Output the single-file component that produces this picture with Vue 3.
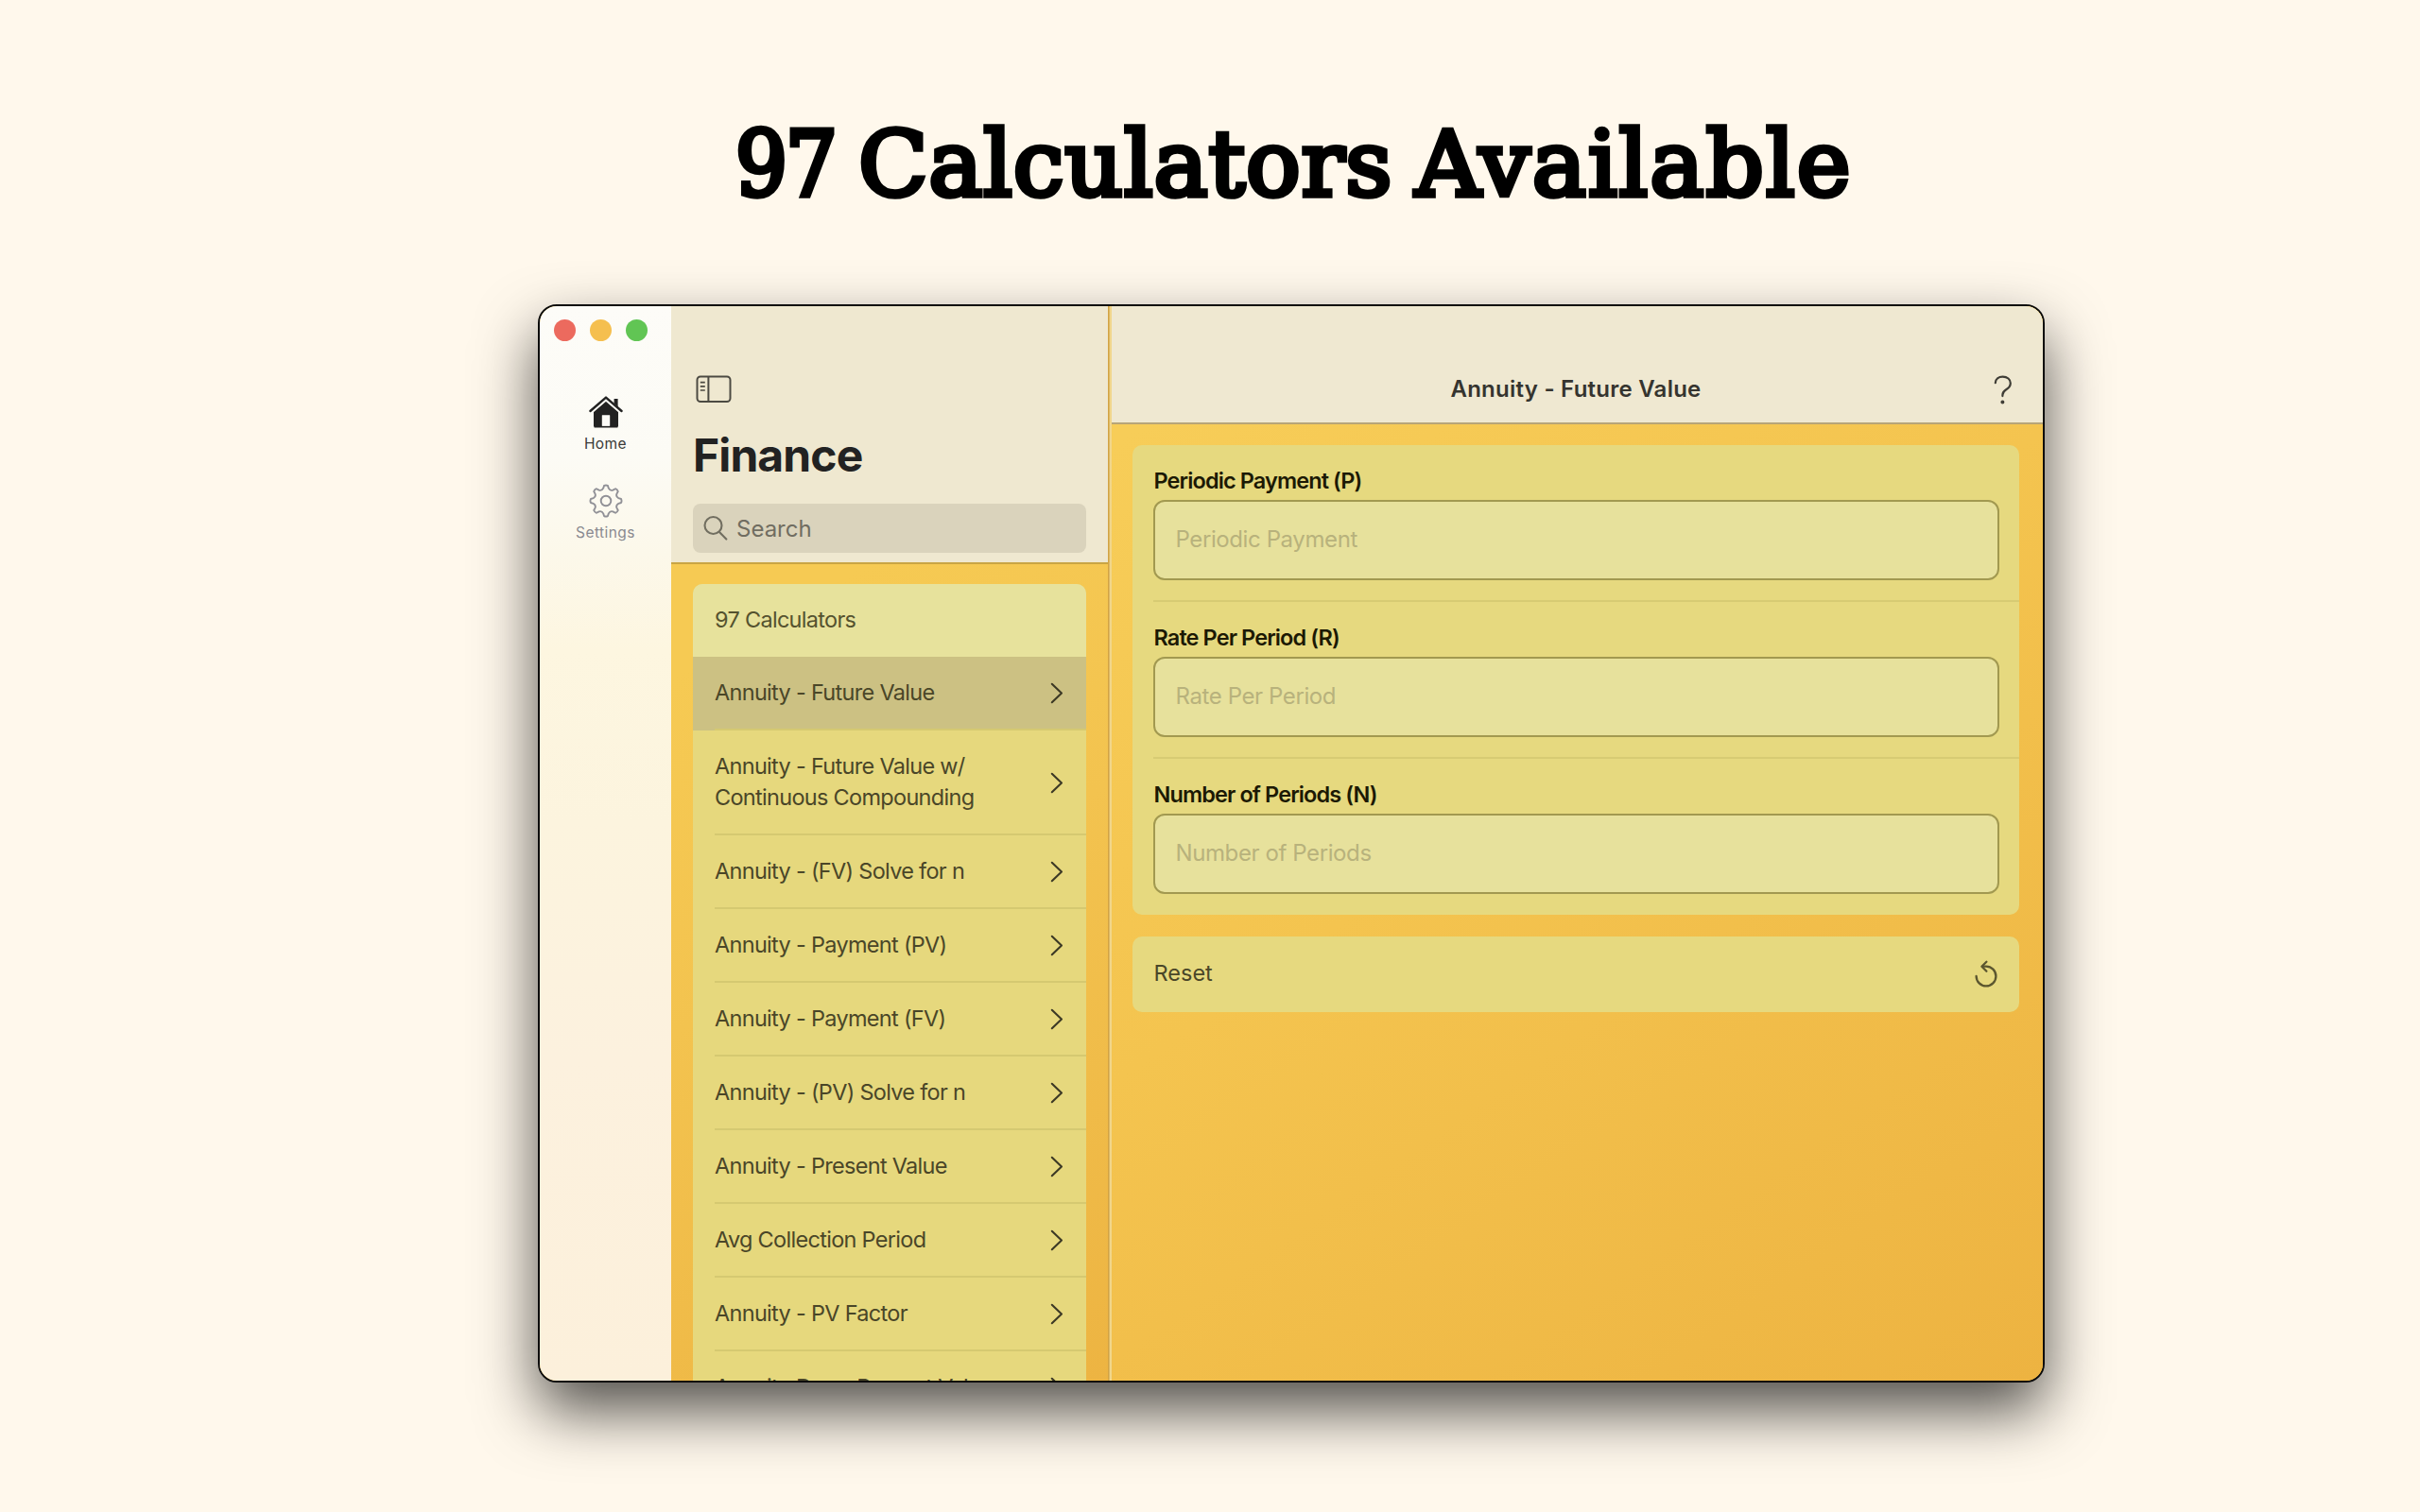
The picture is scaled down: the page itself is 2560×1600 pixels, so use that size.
<script setup>
const calculators = [
  'Annuity - Future Value',
  'Annuity - Future Value w/ Continuous Compounding',
  'Annuity - (FV) Solve for n',
  'Annuity - Payment (PV)',
  'Annuity - Payment (FV)',
  'Annuity - (PV) Solve for n',
  'Annuity - Present Value',
  'Avg Collection Period',
  'Annuity - PV Factor',
  'Annuity Due - Present Value'
]

const fields = [
  { label: 'Periodic Payment (P)', placeholder: 'Periodic Payment' },
  { label: 'Rate Per Period (R)', placeholder: 'Rate Per Period' },
  { label: 'Number of Periods (N)', placeholder: 'Number of Periods' }
]

// Eight-tooth gear outline centred on 18,18
function gearPath() {
  const at = (r, deg) => {
    const a = (deg * Math.PI) / 180
    return `${(18 + r * Math.sin(a)).toFixed(2)} ${(18 - r * Math.cos(a)).toFixed(2)}`
  }
  let d = `M${at(16.2, -7)}`
  for (let i = 0; i < 8; i++) {
    const c = i * 45
    d += `Q${at(17, c)} ${at(16.2, c + 7)}`
    d += `L${at(13.6, c + 12)}Q${at(11.2, c + 22.5)} ${at(13.6, c + 33)}`
    d += `L${at(16.2, c + 38)}`
  }
  return d + 'Z'
}
const gear = gearPath()
</script>

<template>
  <main class="page">
    <h1 class="headline">
      <span class="word-num">97</span>
      <span class="word-mid">Calculators</span>
      <span class="word-end">Available</span>
    </h1>

    <section class="window">
      <nav class="rail">
        <div class="lights">
          <i class="red"></i><i class="amber"></i><i class="green"></i>
        </div>
        <a class="tab active">
          <svg width="38" height="36" viewBox="0 0 38 36">
            <path d="M27.6 4h4v10l-4-3.4z" fill="#222" />
            <path d="M19 6.6 6 17.6V33.4h9V21.6h8v11.8h9V17.6z" fill="#222" />
            <path d="M2.4 18.4 19 4.2l16.6 14.2" fill="none" stroke="#fcfbf5" stroke-width="4" />
            <path d="M2.4 17 19 2.6 35.6 17" fill="none" stroke="#222" stroke-width="2.4" stroke-linecap="round" stroke-linejoin="round" />
            <path d="M6.6 33.6h24.8" stroke="#222" stroke-width="2" />
            <path d="M14.8 32.8V21.6h8.4v11.2z" fill="#fdfcf8" />
          </svg>
          <span>Home</span>
        </a>
        <a class="tab">
          <svg width="36" height="36" viewBox="0 0 36 36" fill="none" stroke="#909096" stroke-width="1.9" stroke-linejoin="round">
            <path :d="gear" />
            <circle cx="18" cy="18" r="5.3" />
          </svg>
          <span>Settings</span>
        </a>
      </nav>

      <aside class="list-pane">
        <header class="list-head">
          <svg class="toggle" width="38" height="30" viewBox="0 0 38 30" fill="none" stroke="#4c4a42" stroke-width="2">
            <rect x="1.5" y="1.5" width="35" height="26.5" rx="3.5" />
            <path d="M13.4 1.5V28" />
            <path d="M4.8 7.6h5M4.8 11.8h5M4.8 16h5" stroke-width="1.7" />
          </svg>
          <h2>Finance</h2>
          <div class="search">
            <svg width="26" height="28" viewBox="0 0 26 28" fill="none" stroke="#716e60" stroke-width="2.1" stroke-linecap="round">
              <circle cx="10.5" cy="11" r="9" />
              <path d="M17 18l7.3 7.6" />
            </svg>
            <span>Search</span>
          </div>
        </header>
        <ul class="list">
          <li class="count">97 Calculators</li>
          <li v-for="(name, i) in calculators" :key="name" class="item" :class="{ selected: i === 0 }">
            <span>{{ name }}</span>
            <svg width="14" height="23" viewBox="0 0 14 23" fill="none" stroke="#3c3925" stroke-width="2.1" stroke-linecap="round" stroke-linejoin="round">
              <path d="M1.8 1.8 12 11.5 1.8 21.2" />
            </svg>
          </li>
        </ul>
      </aside>

      <div class="divider"></div>

      <div class="detail">
        <header class="detail-head">
          <h3>Annuity - Future Value</h3>
          <svg class="help" width="20" height="32" viewBox="0 0 20 32" fill="none" stroke="#3f3d36" stroke-width="2.2" stroke-linecap="round">
            <path d="M1.8 8.2C2 4 5.2 1.6 9.6 1.6c4.7 0 8.2 2.8 8.2 6.9 0 3.2-1.7 5-4.6 6.8-2.9 1.8-3.8 3.2-3.8 5.6v1.2" />
            <circle cx="9.4" cy="28.6" r="1.4" fill="#3f3d36" stroke-width="1.2" />
          </svg>
        </header>
        <div class="card form">
          <div v-for="f in fields" :key="f.label" class="field">
            <label>{{ f.label }}</label>
            <div class="box">{{ f.placeholder }}</div>
          </div>
        </div>
        <div class="card reset">
          <span>Reset</span>
          <svg width="26" height="30" viewBox="0 0 26 30" fill="none" stroke="#5b562f" stroke-width="2.3" stroke-linecap="round" stroke-linejoin="round">
            <path d="M2.6 17A10.4 10.4 0 1 0 13 6.6H9.5" />
            <path d="M13.4 1.8 8.4 6.8l5 5" />
          </svg>
        </div>
      </div>
    </section>
  </main>
</template>

<style>
body { background: #fff8ec; }
</style>

<style scoped>
* { box-sizing: border-box; }
.page {
  width: 2560px;
  height: 1600px;
  overflow: hidden;
  background: #fff8ec;
  font-family: Inter, "Liberation Sans", sans-serif;
  color: #4a4628;
}
.headline {
  display: flex;
  align-items: baseline;
  height: 322px;
  margin: 0;
  padding: 114px 0 0 778px;
  font: 400 96px/120px "DejaVu Serif", serif;
  color: #000;
  -webkit-text-stroke: 5.5px #000;
}
.word-num { width: 130px; letter-spacing: -2px; font-family: "DejaVu Serif Condensed", "DejaVu Serif", serif; }
.word-mid { width: 589px; letter-spacing: 0.8px; }
.word-end { letter-spacing: 2px; }

.window {
  display: flex;
  width: 1594px;
  height: 1141px;
  margin-left: 569px;
  border: 2px solid #0c0c0c;
  border-radius: 20px;
  overflow: hidden;
  background: #f4c44f;
  box-shadow: 0 30px 64px rgba(0, 0, 0, 0.68);
}
.rail {
  display: flex;
  flex-direction: column;
  align-items: center;
  width: 139px;
  background: linear-gradient(180deg, #fdfcf8 0%, #fcfbf5 14%, #fcf8ea 23%, #fdf6e0 32%, #fcf4de 48%, #fcf1de 70%, #fcf0db 100%);
}
.lights {
  display: flex;
  gap: 15px;
  align-self: flex-start;
  margin: 14px 0 57px 15px;
}
.lights i { width: 23px; height: 23px; border-radius: 50%; }
.red { background: #ec6a5e; }
.amber { background: #f5bf4f; }
.green { background: #61c554; }
.tab {
  display: flex;
  flex-direction: column;
  align-items: center;
  gap: 6px;
  width: 100%;
  height: 94px;
  font-size: 15.5px;
  line-height: 20px;
  letter-spacing: 0.45px;
  color: #8a8a90;
}
.tab.active { color: #3a3a38; }

.list-pane {
  display: flex;
  flex-direction: column;
  width: 462px;
  background: linear-gradient(150deg, #f6ca53 28%, #f3c34f 55%, #edb442 100%);
}
.list-head {
  flex: none;
  height: 273px;
  padding: 73px 23px 0;
  background: #efe8d0;
  border-bottom: 2px solid #c9a544;
}
.toggle { display: block; margin-left: 3px; }
h2 {
  margin: 25px 0 0;
  height: 81px;
  font-size: 48px;
  font-weight: 700;
  line-height: 60px;
  letter-spacing: -0.9px;
  color: #222;
}
.search {
  display: flex;
  align-items: center;
  gap: 9px;
  height: 52px;
  padding: 0 11px;
  border-radius: 8px;
  background: #dad3bc;
  font-size: 24px;
  color: #706d61;
}
.list {
  flex: 1;
  min-height: 0;
  overflow: hidden;
  margin: 21px 23px 0;
  padding: 0;
  list-style: none;
  border-radius: 10px 10px 0 0;
  background: #e6d87d;
  font-size: 23.5px;
  line-height: 33.5px;
  letter-spacing: -0.7px;
}
.count {
  height: 77px;
  padding: 21px 23px 0;
  background: #e7e29c;
  color: #55522f;
}
.item {
  position: relative;
  display: flex;
  align-items: center;
  justify-content: space-between;
  height: 78px;
  padding: 0 24px 0 23px;
}
.item:nth-child(3) { height: 111px; }
.item span { width: 300px; margin-top: -3px; }
.item svg { margin-top: -1px; }
.item::after {
  content: "";
  position: absolute;
  left: 23px;
  right: 0;
  bottom: 0;
  height: 2px;
  background: #d5c971;
}
.item.selected { background: #ccc183; }

.divider {
  width: 4px;
  background: linear-gradient(90deg, #d2a344 0 1px, #dcb864 1px 2px, #f1d68b 2px 4px);
}
.detail {
  flex: 1;
  background: linear-gradient(145deg, #f7cd58 8%, #f4c44f 45%, #edb341 100%);
}
.detail-head {
  position: relative;
  height: 125px;
  background: #efe8d1;
  border-bottom: 2px solid #b7a578;
}
h3 {
  margin: 0;
  padding: 70px 3px 0 0;
  font-size: 24px;
  font-weight: 600;
  line-height: 36px;
  letter-spacing: 0.25px;
  text-align: center;
  color: #35342f;
}
.help { position: absolute; right: 32px; top: 73px; }
.card {
  margin: 23px 25px 0 21.5px;
  border-radius: 10px;
  background: #e6d97f;
}
.form { height: 497px; margin-top: 22px; }
.field {
  position: relative;
  height: 166px;
  padding: 22px 21px 0 22px;
}
.field:not(:last-child)::after {
  content: "";
  position: absolute;
  left: 22px;
  right: 0;
  bottom: 0;
  height: 2px;
  background: #d7cb73;
}
label {
  display: block;
  height: 36px;
  padding-left: 1px;
  font-size: 23.5px;
  font-weight: 600;
  line-height: 32px;
  letter-spacing: -0.9px;
  color: #1c1904;
}
.box {
  height: 85px;
  padding: 0 22px;
  border: 2px solid #a29950;
  border-radius: 12px;
  background: #e7e19c;
  font-size: 24px;
  line-height: 80px;
  letter-spacing: -0.4px;
  color: #b8b27c;
}
.reset {
  display: flex;
  align-items: center;
  justify-content: space-between;
  height: 80px;
  padding: 0 22px 0 23px;
  font-size: 23.5px;
}
.reset span { margin-top: -3px; }
</style>
